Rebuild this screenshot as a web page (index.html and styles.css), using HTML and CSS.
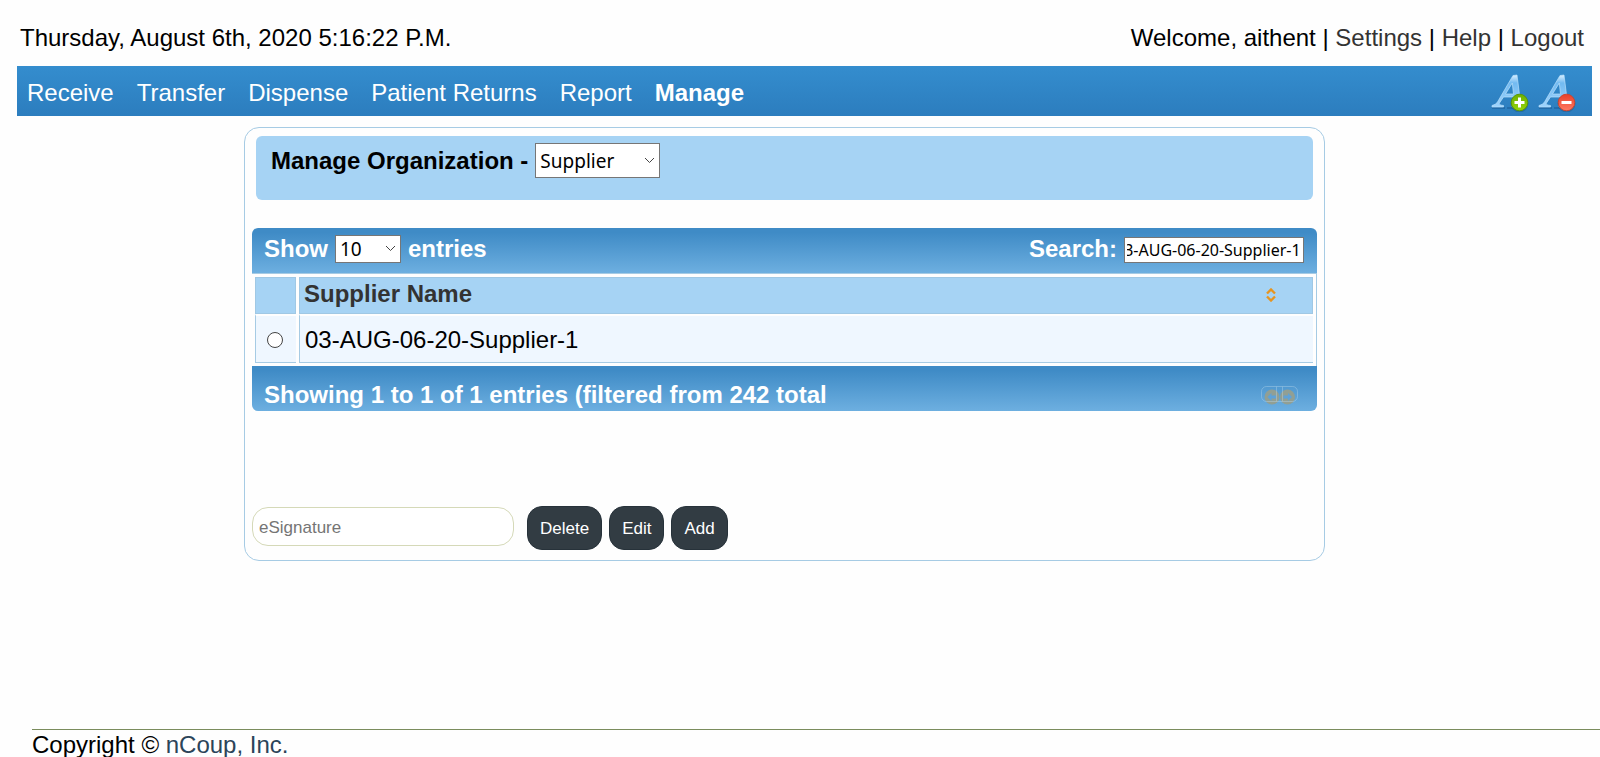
FILE: index.html
```html
<!DOCTYPE html>
<html lang="en">
<head>
<meta charset="utf-8">
<title>Manage Organization</title>
<link rel="stylesheet" href="styles.css">
</head>
<body>
<header class="topbar">
  <div>Thursday, August 6th, 2020 5:16:22 P.M.</div>
  <div>Welcome, aithent | <a href="#">Settings</a> | <a href="#">Help</a> | <a href="#">Logout</a></div>
</header>
<nav class="nav">
  <div class="nav-links">
    <a href="#">Receive</a>
    <a href="#">Transfer</a>
    <a href="#">Dispense</a>
    <a href="#">Patient Returns</a>
    <a href="#">Report</a>
    <a href="#" class="active">Manage</a>
  </div>
  <div class="nav-tools">
    <button type="button" class="font-btn" aria-label="Increase font size">
      <svg width="38" height="40" viewBox="0 0 38 40">
        <defs>
          <linearGradient id="letter" x1="0" y1="0" x2="0" y2="1"><stop offset="0" stop-color="#d8efff"/><stop offset=".25" stop-color="#72baf1"/><stop offset="1" stop-color="#9fd4fd"/></linearGradient>
          <linearGradient id="green" x1="0" y1="0" x2="0" y2="1"><stop offset="0" stop-color="#6fb000"/><stop offset="1" stop-color="#93d40c"/></linearGradient>
          <linearGradient id="red" x1="0" y1="0" x2="0" y2="1"><stop offset="0" stop-color="#e8402a"/><stop offset="1" stop-color="#ff7a62"/></linearGradient>
        </defs>
        <path d="M1 36h13M16 36h10" stroke="#1b5f9c" stroke-width="2" opacity=".6"/>
        <path fill-rule="evenodd" fill="url(#letter)" stroke="#b9e0fb" stroke-width=".7" d="M22 3.500L26 3l3.500 28q.3 1.500 2.500 2.500V35H21v-1.500q3-.5 2.700-2.500l-.7-6H12.500l-4 6q-1.500 2 4 2.500V35H1v-1.500q3.500-.3 5.500-3.500zM21.300 11L14.500 22h8z"/>
        <circle cx="28.500" cy="31.500" r="9" fill="#174c78" opacity=".35"/>
        <circle cx="28.500" cy="30.500" r="8.300" fill="url(#green)" stroke="#5c9708"/>
        <path d="M28.500 25.500v10M23.500 30.500h10" stroke="#fff" stroke-width="3"/>
      </svg>
    </button>
    <button type="button" class="font-btn" aria-label="Decrease font size">
      <svg width="38" height="40" viewBox="0 0 38 40">
        <path d="M1 36h13M16 36h10" stroke="#1b5f9c" stroke-width="2" opacity=".6"/>
        <path fill-rule="evenodd" fill="url(#letter)" stroke="#b9e0fb" stroke-width=".7" d="M22 3.500L26 3l3.500 28q.3 1.500 2.500 2.500V35H21v-1.500q3-.5 2.700-2.500l-.7-6H12.500l-4 6q-1.500 2 4 2.500V35H1v-1.500q3.500-.3 5.500-3.500zM21.300 11L14.500 22h8z"/>
        <circle cx="28.500" cy="31.500" r="9" fill="#174c78" opacity=".35"/>
        <circle cx="28.500" cy="30.500" r="8.300" fill="url(#red)" stroke="#cf4630"/>
        <path d="M23.500 30.500h10" stroke="#fff" stroke-width="3"/>
      </svg>
    </button>
  </div>
</nav>
<main class="panel">
  <div class="panel-head">
    <label for="org">Manage Organization -</label>
    <span class="select-wrap select-org">
      <select id="org"><option>Supplier</option></select>
      <svg class="chevron" width="11" height="7" viewBox="0 0 11 7"><path d="M1 1l4.500 4.500L10 1" fill="none" stroke="#444"/></svg>
    </span>
  </div>
  <section class="grid">
    <div class="bar bar-top">
      <div class="length">
        <label for="len">Show</label>
        <span class="select-wrap select-len">
          <select id="len"><option>10</option></select>
          <svg class="chevron" width="11" height="7" viewBox="0 0 11 7"><path d="M1 1l4.500 4.500L10 1" fill="none" stroke="#444"/></svg>
        </span>
        <span>entries</span>
      </div>
      <div class="search">
        <label for="search">Search:</label>
        <input id="search" class="search-input" type="text" value="03-AUG-06-20-Supplier-1">
      </div>
    </div>
    <div class="table-frame">
      <table class="table">
        <thead>
          <tr>
            <th class="col-pick"></th>
            <th><div class="th-inner"><span>Supplier Name</span>
              <svg width="10" height="14" viewBox="0 0 10 14"><path d="M1 5.500l4-4 4 4M1 8.500l4 4 4-4" fill="none" stroke="#e69420" stroke-width="2.400"/></svg></div></th>
          </tr>
        </thead>
        <tbody>
          <tr>
            <td class="col-pick"><input type="radio" class="radio" name="supplier" aria-label="03-AUG-06-20-Supplier-1"></td>
            <td>03-AUG-06-20-Supplier-1</td>
          </tr>
        </tbody>
      </table>
    </div>
    <div class="bar bar-bottom">
      <div>Showing 1 to 1 of 1 entries (filtered from 242 total</div>
      <svg class="pager" width="38" height="20" viewBox="0 0 38 20">
        <circle cx="11" cy="11" r="7.500" fill="#919f94"/>
        <circle cx="26.500" cy="11" r="7.500" fill="#919f94"/>
        <path d="M6.500 11l4-4v2.500H15v3h-4.500V15zM31 11l-4-4v2.500h-4.500v3H27V15z" fill="#5fa2d8"/>
        <path d="M15.500.5H5.500a5 5 0 0 0-5 5v5a5 5 0 0 0 5 5h10M21.500.5h10a5 5 0 0 1 5 5v5a5 5 0 0 1-5 5h-10M15.500.5h6v15h-6z" fill="none" stroke="#b9d6ec" opacity=".4"/>
      </svg>
    </div>
  </section>
  <form class="actions">
    <input class="esign" type="text" placeholder="eSignature" aria-label="eSignature">
    <div class="action-buttons">
      <button type="button" class="btn">Delete</button>
      <button type="button" class="btn">Edit</button>
      <button type="button" class="btn">Add</button>
    </div>
  </form>
</main>
<footer class="footer">Copyright © <a href="#">nCoup, Inc.</a></footer>
<script src="app.js"></script>
</body>
</html>
```
FILE: styles.css
```css
* { box-sizing: border-box; }

body {
  margin: 0;
  background: #fefefe;
  color: #000;
  font: 24px/28px "Liberation Sans", Arial, sans-serif;
}

a { color: #333; text-decoration: none; }

.topbar {
  display: flex;
  justify-content: space-between;
  padding: 24px 16px 14px 20px;
}

.nav {
  display: flex;
  align-items: center;
  justify-content: space-between;
  height: 50px;
  margin: 0 8px 0 17px;
  padding: 0 16px 0 10px;
  background: linear-gradient(#348dce, #2c7dbe);
}

.nav-links { display: flex; gap: 23px; padding-top: 3px; }
.nav-links a { color: #fff; }
.nav-links .active { font-weight: bold; }
.nav-tools { display: flex; gap: 9px; padding-top: 2px; }
.font-btn { padding: 0; border: 0; background: none; line-height: 0; }

.panel {
  margin: 11px 275px 0 244px;
  padding: 8px 7px 10px;
  border: 1px solid #a6cbe4;
  border-radius: 15px;
}

.panel-head {
  display: flex;
  align-items: flex-start;
  gap: 7px;
  height: 64px;
  margin: 0 4px;
  padding: 7px 15px;
  border-radius: 6px;
  background: #a6d3f4;
  font-weight: bold;
}
.panel-head label { padding-top: 4px; }

.select-wrap { position: relative; display: inline-flex; }
.select-wrap select {
  width: 100%;
  padding: 0 4px;
  border: 1px solid #767676;
  border-radius: 0;
  appearance: none;
  background: #fff;
  color: #000;
  font: 19px "Noto Sans", sans-serif;
}
.select-org { width: 125px; height: 35px; }
.select-len { width: 66px; height: 28px; }
.chevron { position: absolute; right: 5px; top: calc(50% - 4px); pointer-events: none; }

.grid { margin-top: 28px; }

.bar {
  display: flex;
  justify-content: space-between;
  background: linear-gradient(#3f8bc6 10%, #6dafe0);
  color: #fff;
  font-weight: bold;
}
.bar-top { height: 45px; padding: 7px 13px 7px 12px; border-radius: 6px 6px 0 0; }
.bar-bottom { height: 45px; padding: 15px 18px 0 12px; border-radius: 0 0 6px 6px; }
.length, .search { display: flex; align-items: center; gap: 7px; height: 28px; }
.search { padding-top: 2px; }
.search label { line-height: 24px; margin-bottom: 2px; }

.search-input {
  width: 180px;
  height: 26px;
  padding: 0 2px;
  border: 1px solid #767676;
  font: 16px "Noto Sans", sans-serif;
}

.table-frame {
  padding: 3px;
  border: solid #a6cbe4;
  border-width: 1px 1px 0 0;
}

.table { width: 100%; border-collapse: separate; border-spacing: 0; }
.table tr { display: flex; gap: 3px; }
.table th, .table td { display: flex; align-items: center; flex: 1; }
.table th {
  height: 37px;
  padding: 0 4px 4px;
  border: 1px solid #a0c8e4;
  background: #a6d3f4;
  color: #333;
  text-align: left;
}
.table td {
  height: 49px;
  padding: 2px 5px 0;
  border: solid #a6cbe4;
  border-width: 0 0 1px 1px;
  border-top: 2px solid #fefefe;
  background: #eff7ff;
}
.table .col-pick { flex: none; justify-content: center; width: 41px; padding-right: 7px; }
.th-inner { display: flex; flex: 1; align-items: center; justify-content: space-between; padding-right: 32px; }
.th-inner svg { margin-top: 3px; }

.radio {
  width: 16px;
  height: 16px;
  margin: 0;
  border: 1px solid #444;
  border-radius: 50%;
  appearance: none;
  background: #fff;
}

.pager { margin-top: 5px; }

.actions { display: flex; align-items: flex-start; gap: 13px; margin-top: 95px; }
.esign {
  width: 262px;
  height: 39px;
  margin-top: 1px;
  padding: 2px 6px 0;
  border: 1px solid #d5d9b8;
  border-radius: 16px;
  background: #fff;
  font: 17px "Liberation Sans", Arial, sans-serif;
}
.esign::placeholder { color: #757575; }
.action-buttons { display: flex; gap: 7px; }
.btn {
  height: 44px;
  padding: 1px 12px 0;
  border: 1px solid #27323a;
  border-radius: 15px;
  background: #323c43;
  color: #fff;
  font: 17px "Liberation Sans", Arial, sans-serif;
}

.footer {
  margin: 168px 0 0 32px;
  padding-top: 1px;
  border-top: 1px solid #7a8c5c;
  line-height: 27px;
}
.footer a { color: #2b4459; }
```
FILE: app.js
```js
const search = document.getElementById("search");
search.scrollLeft = search.scrollWidth;
```
